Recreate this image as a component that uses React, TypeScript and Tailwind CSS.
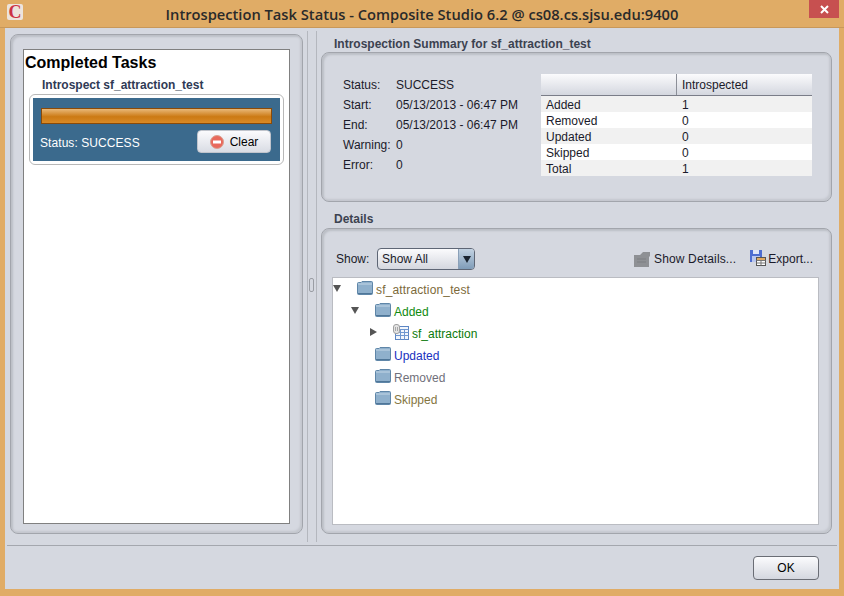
const sans = { fontFamily: '"Liberation Sans", Arial, sans-serif' };

function Folder() {
  return (
    <svg width="16" height="14" viewBox="0 0 16 14" className="shrink-0">
      <path d="M0.5 2.5 Q0.5 1.5 1.5 1.5 H4 L5 0.5 H14.5 Q15.5 0.5 15.5 1.5 V12.5 Q15.5 13.5 14.5 13.5 H1.5 Q0.5 13.5 0.5 12.5 Z" fill="#8fb0cc" stroke="#5f86a8" />
      <path d="M1 3 H15" stroke="#c3d6e6" />
      <path d="M1 12.5 H15" stroke="#4f7698" />
    </svg>
  );
}

function TableIcon() {
  return (
    <svg width="16" height="16" viewBox="0 0 16 16" className="shrink-0">
      <rect x="2.5" y="2.5" width="13" height="13" fill="#f2f6fc" stroke="#5c86c4" />
      <path d="M2.5 5.5 H15.5 M2.5 8.5 H15.5 M2.5 11.5 H15.5 M7.5 5.5 V15.5 M11.5 5.5 V15.5" stroke="#6f97d0" />
      <rect x="0.5" y="0.5" width="6" height="9" rx="2.5" fill="#e4e4e4" stroke="#a0a0a0" />
      <path d="M2.5 3 V7 M4.5 3 V7" stroke="#a8a8a8" />
    </svg>
  );
}

function Arrow({ open }: { open: boolean }) {
  return (
    <svg width="8" height="8" viewBox="0 0 8 8" className="shrink-0">
      {open ? <path d="M0 1 H8 L4 8 Z" fill="#555" /> : <path d="M1 0 L8 4 L1 8 Z" fill="#555" />}
    </svg>
  );
}

function TreeRow({ indent, arrow, label, color, table }: { indent: string; arrow?: "open" | "closed"; label: string; color: string; table?: boolean }) {
  return (
    <div className={`flex h-[22px] items-center ${indent}`}>
      <div className="-mt-[4px] w-[24px] shrink-0">{arrow && <Arrow open={arrow === "open"} />}</div>
      <div className="-mt-[5px] shrink-0">{table ? <TableIcon /> : <Folder />}</div>
      <span className={`ml-[3px] text-[12px] ${color}`}>{label}</span>
    </div>
  );
}

const summary = [
  ["Status:", "SUCCESS"],
  ["Start:", "05/13/2013 - 06:47 PM"],
  ["End:", "05/13/2013 - 06:47 PM"],
  ["Warning:", "0"],
  ["Error:", "0"],
];

const counts = [
  ["Added", "1"],
  ["Removed", "0"],
  ["Updated", "0"],
  ["Skipped", "0"],
  ["Total", "1"],
];

const bevel = "rounded-[8px] border border-[#a2a5ac] bg-[#d5d8e0] shadow-[inset_2px_2px_2px_#bcbfc6,inset_-2px_-2px_2px_#c4c7ce]";

export default function App() {
  return (
    <div className="flex h-[596px] w-[844px] flex-col overflow-hidden bg-[#e0ac66] text-[#1a1a2a]" style={sans}>
      {/* title bar */}
      <div className="grid h-[28px] shrink-0 grid-cols-[1fr_auto_1fr] border-b border-[#c8985a]">
        <div className="pl-[7px] pt-[4px]">
          <div className="flex h-[16px] w-[16px] items-center justify-center rounded-[2px] bg-[#ece4dc] text-[18px] leading-none font-bold text-[#cc3344]" style={{ fontFamily: '"Liberation Serif", serif' }}>C</div>
        </div>
        <div className="pt-[3px] text-[14.7px] font-bold text-[#2a2a2a]" style={{ fontFamily: '"Open Sans", sans-serif', fontWeight: 600 }}>Introspection Task Status - Composite Studio 6.2 @ cs08.cs.sjsu.edu:9400</div>
        <div className="flex justify-end pr-[5px]">
          <div className="flex h-[18px] w-[30px] items-center justify-center bg-[#c75050]">
            <svg width="9" height="9" viewBox="0 0 9 9"><path d="M1 1 L8 8 M8 1 L1 8" stroke="#fff" strokeWidth="2" /></svg>
          </div>
        </div>
      </div>

      {/* dialog body */}
      <div className="mx-[5px] flex h-[561px] flex-col bg-[#d5d8e0]">
        <div className="flex h-[517px] pl-[5px] pt-[6px]">
          {/* left panel */}
          <div className={`h-[500px] w-[293px] shrink-0 px-[12px] pt-[14px] ${bevel}`}>
            <div className="h-[475px] border border-[#808080] bg-white">
              <div className="pl-[1px] pt-[3px] text-[16px] leading-[20px] font-bold text-black">Completed Tasks</div>
              <div className="pl-[18px] pt-[4px] text-[12px] leading-[16px] font-bold text-[#2f3a55]">Introspect sf_attraction_test</div>
              <div className="ml-[5px] mt-[1px] h-[71px] w-[255px] rounded-[6px] border border-[#b8b8b8] bg-white p-[3px]">
                <div className="h-[63px] bg-[#3b6a8d] px-[7px] pt-[10px]">
                  <div className="ml-[1px] h-[16px] w-[231px] border border-[#8a4a08] bg-[linear-gradient(#e9b878,#cc7a14_55%,#d98a26)]" />
                  <div className="mt-[6px] flex h-[23px] items-center justify-between pr-[2px]">
                    <span className="pt-[2px] text-[12px] tracking-[0.07px] text-white">Status: SUCCESS</span>
                    <button type="button" className="flex h-[23px] w-[74px] items-center justify-center gap-[6px] rounded-[4px] border border-[#c0c4cc] bg-[linear-gradient(#fbfbfd,#d9dce4)] text-[12px] text-black">
                      <svg width="14" height="14" viewBox="0 0 14 14"><circle cx="7" cy="7" r="6.5" fill="#e8695c" stroke="#d9a090" /><rect x="3" y="5.5" width="8" height="3" fill="#fff" /></svg>
                      Clear
                    </button>
                  </div>
                </div>
              </div>
            </div>
          </div>

          {/* splitter */}
          <div className="relative h-[511px] w-[18px] shrink-0">
            <div className="ml-[4px] mt-[-3px] h-full w-[10px] border-x border-[#b4b7be]" />
            <div className="absolute left-[6px] top-[244px] h-[14px] w-[5px] rounded-[2px] border border-[#9a9da4]" />
          </div>

          {/* right column */}
          <div className="flex h-[500px] w-[511px] shrink-0 flex-col">
            <div className="h-[18px] pl-[13px] pt-[3px] text-[12px] leading-[14px] font-bold text-[#3c4250]">Introspection Summary for sf_attraction_test</div>
            <div className={`flex h-[150px] shrink-0 pl-[21px] pt-[22px] ${bevel}`}>
              <div className="w-[198px] shrink-0">
                {summary.map(([k, v]) => (
                  <div key={k} className="flex h-[20px] items-center text-[12px]">
                    <span className="w-[53px]">{k}</span>
                    <span>{v}</span>
                  </div>
                ))}
              </div>
              <div className="-mt-[1px] w-[271px] shrink-0 text-[12px]">
                <div className="flex h-[22px] items-center border-b border-[#7a7d88] bg-[linear-gradient(#fbfbfd,#d4d7df)]">
                  <div className="h-full w-[136px] border-r border-[#8c8f98]" />
                  <span className="pl-[5px]">Introspected</span>
                </div>
                {counts.map(([k, v], i) => (
                  <div key={k} className={`flex h-[16px] items-center pt-[2px] ${i % 2 === 0 ? "bg-[#f1f1f1]" : "bg-white"}`}>
                    <span className="w-[141px] pl-[5px]">{k}</span>
                    <span>{v}</span>
                  </div>
                ))}
              </div>
            </div>

            <div className="h-[26px] pl-[13px] pt-[10px] text-[12px] leading-[14px] font-bold text-[#3c4250]">Details</div>
            <div className={`flex h-[306px] flex-col px-[11px] pt-[19px] ${bevel}`}>
              <div className="flex h-[22px] items-center text-[12px]">
                <span className="w-[45px] pl-[3px]">Show:</span>
                <div className="-ml-[1px] flex h-[22px] w-[98px] items-center justify-between overflow-hidden rounded-[4px] border border-[#5e6675] bg-[linear-gradient(#fbfbfd,#d4d7df)]">
                  <span className="pl-[4px]">Show All</span>
                  <div className="flex h-full w-[16px] items-center justify-center border-l border-[#8aa0b8] bg-[linear-gradient(#c2d2e2,#7f9cb8)]">
                    <svg width="8" height="7" viewBox="0 0 8 7"><path d="M0 0 H8 L4 7 Z" fill="#1a2430" /></svg>
                  </div>
                </div>
                <div className="ml-auto flex items-center pr-[7px]">
                  <svg width="16" height="16" viewBox="0 0 16 16"><path d="M0 4 L6 4 L9 1 L16 1 L16 5 L15 6 L15 16 L0 16 Z" fill="#8e9094" /><path d="M3 8 H12 M3 11 H12" stroke="#7c7e82" /></svg>
                  <span className="ml-[4px] tracking-[0.15px]">Show Details...</span>
                  <svg width="16" height="16" viewBox="0 0 16 16" className="ml-[14px] -mt-[2px]">
                    <rect x="0" y="0" width="12" height="12" fill="#4d6cd0" />
                    <rect x="3" y="0" width="6" height="4" fill="#dfe4f6" />
                    <rect x="2" y="6" width="8" height="6" fill="#b9c6ee" />
                    <rect x="6.5" y="7.5" width="9" height="8" fill="#fff" stroke="#555" />
                    <rect x="7" y="8" width="8" height="2" fill="#e0a860" />
                    <path d="M6.5 10.5 H15.5 M6.5 13 H15.5 M11 10.5 V15.5" stroke="#777" />
                  </svg>
                  <span className="ml-[2px]">Export...</span>
                </div>
              </div>
              <div className="mt-[7px] h-[248px] w-[487px] -ml-[1px] border border-[#babcc2] bg-white pt-[1px]">
                <TreeRow indent="pl-[0px]" arrow="open" label="sf_attraction_test" color="text-[#7c6a3a] tracking-[0.15px]" />
                <TreeRow indent="pl-[18px]" arrow="open" label="Added" color="text-[#0f8a0f]" />
                <TreeRow indent="pl-[36px]" arrow="closed" label="sf_attraction" color="text-[#0a7a0a]" table />
                <TreeRow indent="pl-[18px]" label="Updated" color="text-[#1a30c0]" />
                <TreeRow indent="pl-[18px]" label="Removed" color="text-[#70707a]" />
                <TreeRow indent="pl-[18px]" label="Skipped" color="text-[#84763f]" />
              </div>
            </div>
          </div>
        </div>

        {/* footer */}
        <div className="mx-[2px] h-[1px] bg-[#a4a7ae]" />
        <div className="flex flex-1 justify-end pr-[20px] pt-[10px]">
          <button type="button" className="h-[24px] w-[66px] rounded-[4px] border border-[#6a6d75] bg-[linear-gradient(#fbfbfd,#d4d7df)] text-[12px] text-black">OK</button>
        </div>
      </div>
    </div>
  );
}
